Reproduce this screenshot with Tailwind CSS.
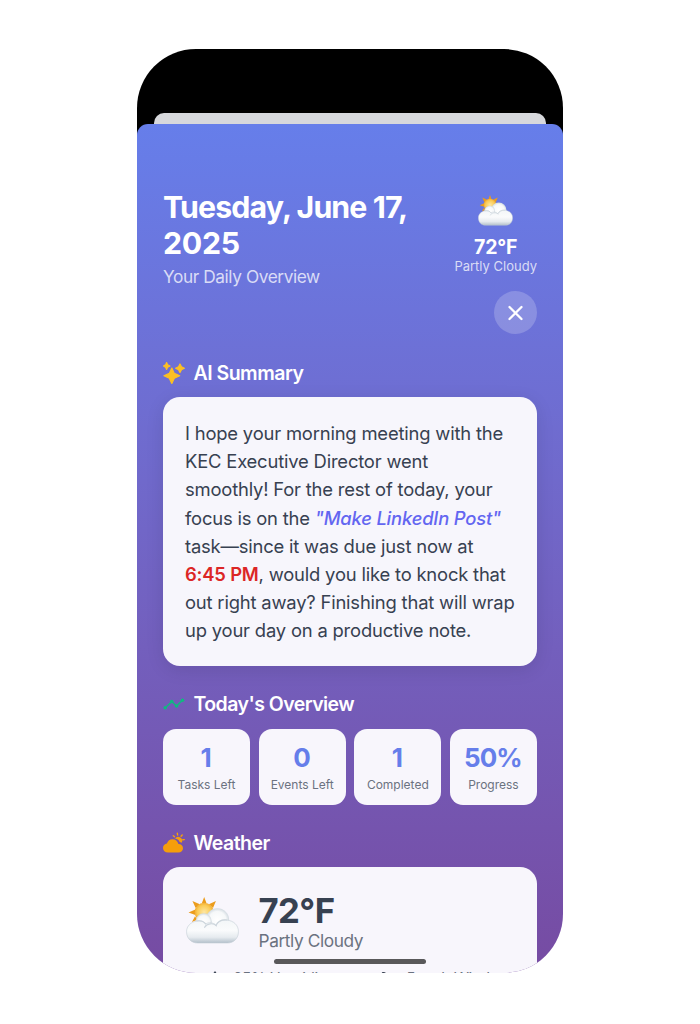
<!DOCTYPE html>
<html lang="en">
<head>
<meta charset="utf-8">
<title>Daily Overview</title>
<script src="https://cdn.jsdelivr.net/npm/@tailwindcss/browser@4"></script>
</head>
<body class="bg-white font-['Inter',sans-serif] antialiased">
<svg class="absolute size-0" aria-hidden="true">
  <defs>
    <radialGradient id="sun" cx=".5" cy=".5" r=".55"><stop offset="0" stop-color="#fde7a4"/><stop offset=".65" stop-color="#fbcb55"/><stop offset="1" stop-color="#eda126"/></radialGradient>
    <radialGradient id="puff" cx=".5" cy=".5" r=".52"><stop offset="0" stop-color="#ffffff"/><stop offset=".7" stop-color="#f6f8f9"/><stop offset="1" stop-color="#cdd6dd"/></radialGradient>
    <linearGradient id="base" x1="0" y1="0" x2="0" y2="1"><stop offset="0" stop-color="#f3f6f8"/><stop offset=".45" stop-color="#fafbfc"/><stop offset=".75" stop-color="#e6ebef"/><stop offset="1" stop-color="#b3c0ca"/></linearGradient>
    <symbol id="cloudy" viewBox="0 0 54 48">
      <path fill="#eb9c1c" d="M18.500 0l2.400 6.500h-4.800zM6.500 4l7.500 3.400-4.200 3.800zM30.500 4l-3 7.200-4.200-3.800zM2.500 15.800l7-3v5.500zM6 25.500l3-5.500 3 3z"/>
      <circle cx="18.500" cy="15.500" r="9.700" fill="url(#sun)"/>
      <circle cx="32" cy="23.500" r="12" fill="url(#puff)"/>
      <circle cx="18" cy="25" r="8.300" fill="url(#puff)"/>
      <path fill="url(#base)" stroke="#c3ced6" stroke-width=".6" d="M11 24.500C14.500 23.700 18 24.500 20 27.500c3-2 8-1.500 10.500 1.500 2-4 6.500-6 11-5.500 7 .8 12 5 12 12 0 6.500-4.500 11.500-11.500 11.500H12C5 47 .5 42 .5 35.500c0-5.500 4-10 10.500-11z"/>
      <path fill="none" stroke="#ccd5dc" stroke-width="1.200" stroke-linecap="round" d="M19 31c2-4 9-5 12-1.500M11 24.500c3.500-.8 7.500.5 9 3M30.500 29c2-4 6.500-6 11-5.500"/>
    </symbol>
  </defs>
</svg>
<main class="flex h-[1024px] w-[700px] flex-col items-center overflow-hidden pt-[49px]">
  <div class="relative h-[924px] w-[426px] overflow-hidden rounded-[59px] bg-[linear-gradient(#000_120px,transparent_120px)] pt-16">
    <div class="mr-[17.500px] ml-[17px] h-[11px] rounded-t-[10px] bg-[#d7d8dc]"></div>
    <div class="h-[849px] rounded-t-[11px] bg-linear-to-b from-[#667eea] to-[#764ba2] px-[26px] pt-[65px]">
      <header class="flex h-[146px] justify-between">
        <div>
          <h1 class="w-[270px] text-[30.300px] leading-9 font-bold tracking-[-0.880px] text-white">Tuesday, June 17,<br><span class="tracking-[-0.300px]">2025</span></h1>
          <p class="mt-[4px] text-[17.300px] leading-6 tracking-[-0.420px] text-white/75">Your Daily Overview</p>
        </div>
        <div class="flex flex-col items-end">
          <div class="flex flex-col items-center pt-[6px]">
            <svg class="h-[31px] w-[35px]"><use href="#cloudy"/></svg>
            <div class="mt-[9px] text-[19.500px] leading-6 font-bold tracking-[-0.200px] text-white">72°F</div>
            <div class="-mt-px text-[13px] leading-4 whitespace-nowrap text-white/75">Partly Cloudy</div>
          </div>
          <button class="mt-[17px] flex size-[43px] shrink-0 items-center justify-center rounded-full bg-white/20" aria-label="Close">
            <svg class="size-[16px]" viewBox="0 0 16 16" fill="none" stroke="white" stroke-width="2.300" stroke-linecap="round"><path d="M1.500 2l12 12M13.500 2l-12 12"/></svg>
          </button>
        </div>
      </header>

      <section class="mt-[27px]">
        <h2 class="flex h-6 items-center gap-[8.500px] text-[19.500px] font-semibold tracking-[-0.500px] text-white">
          <svg class="-mt-0.5 size-[22px]" viewBox="0 0 22 22" fill="#fbbf24" stroke="#fbbf24" stroke-linejoin="round" stroke-width="1.200"><path d="M8.800 6l2.500 5.400 5.400 2.400-5.400 2.400-2.500 5.400-2.500-5.400-5.400-2.400 5.400-2.400zM17 2l1.500 2.800 2.900 1.400-2.900 1.400L17 10.500l-1.500-2.900-2.900-1.400 2.900-1.400zM3.600.6l1.100 2.300 2.300 1.100-2.300 1.100-1.100 2.300-1.100-2.300L.5 4l2-1.100z"/></svg>
          AI Summary
        </h2>
        <p class="mt-[11px] h-[269px] rounded-[17px] bg-[#f7f6fc] px-[22px] pt-[22px] text-[18.400px] leading-[28.200px] tracking-[-0.185px] whitespace-nowrap text-[#374151] shadow-[0_4px_18px_rgba(0,0,0,0.100)]">I hope your morning meeting with the<br>KEC Executive Director went<br>smoothly! For the rest of today, your<br>focus is on the <em class="font-medium text-[#6366f1]">"Make LinkedIn Post"</em><br>task—since it was due just now at<br><strong class="font-semibold text-[#dc2626]">6:45 PM</strong>, would you like to knock that<br>out right away? Finishing that will wrap<br>up your day on a productive note.</p>
      </section>

      <section class="mt-[27px]">
        <h2 class="flex h-6 items-center gap-[8.500px] text-[19.500px] font-semibold tracking-[-0.550px] text-white">
          <svg class="-mt-0.5 size-[22px]" viewBox="0 0 22 22" fill="#10b981"><path fill="none" stroke="#10b981" stroke-width="1.500" d="M2 15l7-6.500 4.500 4.700L19.500 7"/><circle cx="2.200" cy="14.800" r="1.800"/><circle cx="8.700" cy="8.500" r="1.800"/><circle cx="13.500" cy="13" r="1.800"/><circle cx="19.500" cy="7.200" r="1.800"/></svg>
          Today's Overview
        </h2>
        <div class="mt-[11.500px] grid grid-cols-4 gap-[8.500px] text-center">
          <div class="h-[76.500px] rounded-[13px] bg-[#f8f6fc] pt-[13.500px]"><div class="-ml-[2px] text-[26px] leading-8 font-bold tracking-[-0.900px] text-[#667eea]">1</div><div class="mt-[3px] text-[12px] leading-4 text-[#6b7280]">Tasks Left</div></div>
          <div class="h-[76.500px] rounded-[13px] bg-[#f8f6fc] pt-[13.500px]"><div class="-ml-px text-[26px] leading-8 font-bold tracking-[-0.900px] text-[#667eea]">0</div><div class="mt-[3px] text-[12px] leading-4 text-[#6b7280]">Events Left</div></div>
          <div class="h-[76.500px] rounded-[13px] bg-[#f8f6fc] pt-[13.500px]"><div class="-ml-[2px] text-[26px] leading-8 font-bold tracking-[-0.900px] text-[#667eea]">1</div><div class="mt-[3px] text-[12px] leading-4 text-[#6b7280]">Completed</div></div>
          <div class="h-[76.500px] rounded-[13px] bg-[#f8f6fc] pt-[13.500px]"><div class="-ml-px text-[26px] leading-8 font-bold tracking-[-0.900px] text-[#667eea]">50%</div><div class="mt-[3px] text-[12px] leading-4 text-[#6b7280]">Progress</div></div>
        </div>
      </section>

      <section class="mt-[27px]">
        <h2 class="flex h-6 items-center gap-[8.500px] text-[19.500px] font-semibold tracking-[-0.550px] text-white">
          <svg class="-mt-0.5 size-[22px]" viewBox="0 0 22 22" fill="#f59e0b"><path d="M5 20.500C2 20.500 0 18.600 0 16c0-2.400 1.700-4 3.900-4.400C4.800 8.800 6.800 7.300 9.500 7.300c3 0 5 1.800 5.900 4.600 2.800.1 4.600 1.800 4.600 4.300 0 2.600-1.900 4.300-4.600 4.300z"/><path d="M12 6.500a4 4 0 0 1 6.700 4.300l-2-.9c-1-2-2.500-3-4.700-3.400z"/><path stroke="#f59e0b" stroke-width="1.400" stroke-linecap="round" d="M14.300 1.200l.3 1.800M19.200 3l-1.100 1.300M10.300 3.800l1.200 1M21.300 7.600l-1.500.2"/></svg>
          Weather
        </h2>
        <div class="mt-[11px] h-[180px] rounded-[17px] bg-[#f8f6fc] px-[23px] pt-[25px]">
          <div class="flex gap-[19.500px]">
            <svg class="mt-[5px] h-[47px] w-[53px]"><use href="#cloudy"/></svg>
            <div>
              <div class="text-[34.700px] leading-9 font-bold tracking-[-0.600px] text-[#374151]">72°F</div>
              <div class="mt-[1px] text-[17.300px] leading-6 tracking-[-0.400px] text-[#6b7280]">Partly Cloudy</div>
            </div>
          </div>
          <div class="mt-[15.500px] grid grid-cols-2 text-[15.200px] leading-5 tracking-[-0.300px] text-[#6b7280]">
            <div class="flex items-center justify-center gap-3 pl-1"><svg class="h-4 w-3" viewBox="0 0 12 16" fill="#374151"><path d="M6 0c3 4 5 7 5 10a5 5 0 0 1-10 0c0-3 2-6 5-10z"/></svg>65% Humidity</div>
            <div class="flex items-center justify-center gap-3 pl-1"><svg class="h-4 w-4" viewBox="0 0 16 16" fill="none" stroke="#374151" stroke-width="1.500"><path d="M4 2a3 2 0 1 1 2 4H0M0 10h12"/></svg>5 mph Wind</div>
          </div>
        </div>
      </section>
    </div>
    <div class="absolute top-[910px] left-[137px] h-[5px] w-[152px] rounded-full bg-[#59585a]"></div>
  </div>
</main>
</body>
</html>
